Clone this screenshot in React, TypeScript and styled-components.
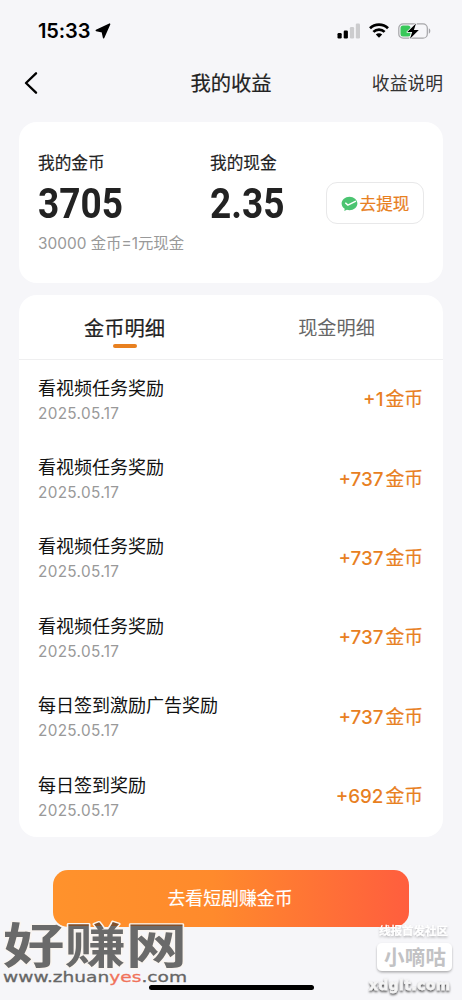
import React from 'react';
import styled, { createGlobalStyle } from 'styled-components';

const GlobalStyle = createGlobalStyle`
  * { box-sizing: border-box; }
  body {
    margin: 0;
    background: #f6f6f9;
    font-family: Inter, "Noto Sans CJK SC", sans-serif;
    color: #222;
  }
`;

const Screen = styled.main`
  position: relative;
  width: 462px;
  height: 1000px;
  overflow: hidden;
  display: flex;
  flex-direction: column;
  background: #f6f6f9;
  white-space: nowrap;
`;

const StatusBar = styled.div`
  height: 60px;
  padding: 1px 31px 0 38px;
  display: flex;
  align-items: center;
  justify-content: space-between;
  color: #000;
`;

const Clock = styled.div`
  display: flex;
  align-items: center;
  gap: 5px;
  font-size: 20px;
  font-weight: 600;
  letter-spacing: -0.1px;
  line-height: 24px;
`;

const StatusIcons = styled.div`
  display: flex;
  align-items: center;
  gap: 9px;
`;

const NavBar = styled.header`
  height: 46px;
  padding: 0 19px 0 24px;
  display: grid;
  grid-template-columns: 1fr auto 1fr;
  align-items: center;
`;

const PageTitle = styled.h1`
  margin: 2px 5px 0 0;
  font-size: 20.3px;
  line-height: 28px;
  font-weight: 400;
  -webkit-text-stroke: 0.2px currentColor;
`;

const NavLink = styled.span`
  justify-self: end;
  margin-top: 2px;
  font-size: 17.8px;
  line-height: 26px;
  color: #333;
`;

const Card = styled.section`
  margin: 0 19px;
  border-radius: 18px;
  background: #fff;
`;

const BalanceCard = styled(Card)`
  height: 161px;
  margin-top: 16px;
  padding: 28px 19px 0;
  display: grid;
  grid-template-columns: 172px 1fr auto;
`;

const BalanceLabel = styled.div`
  font-size: 16.7px;
  line-height: 26px;
  -webkit-text-stroke: 0.15px currentColor;
`;

const BalanceValue = styled.div`
  margin-top: 7px;
  height: 40px;
  font-family: Roboto, sans-serif;
  font-size: 43px;
  line-height: 40px;
  font-weight: 700;
  transform: scaleX(0.86);
  transform-origin: left center;
`;

const BalanceHint = styled.div`
  margin-top: 10px;
  font-size: 15.4px;
  line-height: 22px;
  color: #999;
`;

const WithdrawButton = styled.button`
  width: 98px;
  height: 42px;
  margin-top: 32px;
  padding: 1px 0 0;
  display: flex;
  align-items: center;
  justify-content: center;
  gap: 2px;
  border: 1.5px solid #e8e8e9;
  border-radius: 11px;
  background: #fff;
  color: #e8801f;
  font: 400 16.6px/24px Inter, "Noto Sans CJK SC", sans-serif;
  -webkit-text-stroke: 0.2px currentColor;
`;

const DetailCard = styled(Card)`
  height: 542px;
  margin-top: 12px;
`;

const Tabs = styled.div`
  height: 65px;
  display: grid;
  grid-template-columns: 1fr 1fr;
  border-bottom: 1px solid #efeff0;
`;

const Tab = styled.div<{ $active?: boolean }>`
  padding: 19px 1px 0 0;
  display: flex;
  flex-direction: column;
  align-items: center;
  font-size: ${p => (p.$active ? '20.3px' : '19.2px')};
  line-height: 29px;
  -webkit-text-stroke: ${p => (p.$active ? '0.2px' : '0')} currentColor;
  color: ${p => (p.$active ? '#222' : '#666')};

  &::after {
    content: '';
    width: 24px;
    height: 4px;
    margin-top: 0.5px;
    border-radius: 2px;
    background: ${p => (p.$active ? '#e8801f' : 'transparent')};
  }
`;

const Row = styled.div`
  height: 79.4px;
  padding: 1px 20px 0 19px;
  display: flex;
  align-items: center;
  justify-content: space-between;
`;

const RowTitle = styled.div`
  font-size: 18px;
  line-height: 26px;
  color: #111;
`;

const RowDate = styled.div`
  font-size: 15.3px;
  line-height: 23px;
  letter-spacing: 0.35px;
  color: #999;
`;

const Amount = styled.div`
  display: flex;
  gap: 2px;
  font-size: 18.8px;
  line-height: 28px;
  color: #e8801f;
`;

const AmountNumber = styled.span`
  font-weight: 500;
`;

const AmountUnit = styled.span`
  -webkit-text-stroke: 0.2px currentColor;
`;

const WatchButton = styled.button`
  flex: none;
  width: 356px;
  height: 57px;
  margin: 33px 0 0 53px;
  padding: 1px 2px 0 0;
  border: 0;
  border-radius: 15px;
  background: linear-gradient(90deg, #ff922c 0%, #ff8a2c 45%, #ff5e3e 100%);
  color: #fff;
  font: 400 17.9px/26px Inter, "Noto Sans CJK SC", sans-serif;
  -webkit-text-stroke: 0.15px currentColor;
`;

const HomeIndicator = styled.div`
  position: absolute;
  left: 149px;
  bottom: 10px;
  width: 165px;
  height: 5px;
  border-radius: 3px;
  background: #000;
`;

const SiteMark = styled.svg`
  position: absolute;
  left: 0;
  bottom: 8px;
  overflow: visible;
`;

const CommunityMark = styled.svg`
  position: absolute;
  right: 0;
  bottom: 0;
`;

const LocationIcon = () => (
  <svg width="16" height="16" viewBox="0 0 16 16">
    <path d="M14.600 1.100 1.300 7.400 7.300 8.700 8.600 14.700Z" fill="#000" stroke="#000" strokeWidth="1.500" strokeLinejoin="round" />
  </svg>
);

const SignalIcon = () => (
  <svg width="24" height="16" viewBox="0 0 24 16">
    <rect x="1.500" y="10" width="4.200" height="5.500" rx="1.200" />
    <rect x="7.700" y="7.500" width="4.200" height="8" rx="1.200" />
    <rect x="13.900" y="4" width="4.200" height="11.500" rx="1.200" fill="#ccccce" />
    <rect x="19.800" y=".5" width="4.200" height="15" rx="1.200" fill="#ccccce" />
  </svg>
);

const WifiIcon = () => (
  <svg width="20" height="15" viewBox="0 0 20 15" fill="none" stroke="#000" strokeWidth="2.700">
    <path d="M1 5.300a12.800 12.800 0 0 1 18 0" />
    <path d="M4.400 8.900a8 8 0 0 1 11.200 0" />
    <path d="M10 14.800 6.800 11.600a4.500 4.500 0 0 1 6.400 0Z" fill="#000" stroke="none" />
  </svg>
);

const BatteryIcon = () => (
  <svg width="33" height="16" viewBox="0 0 33 16">
    <rect x=".8" y=".8" width="28.500" height="14.400" rx="4.300" fill="none" stroke="#a5a5a8" strokeWidth="1.200" />
    <rect x="2.500" y="2.500" width="10" height="11" rx="2.500" fill="#38c759" />
    <path d="M30.800 5.300c2 .7 2 4.700 0 5.400Z" fill="#a5a5a8" />
    <path d="M18 .5 9.300 9h4.900l-2.200 6.700 8.800-8.700h-4.900Z" fill="#000" stroke="#f6f6f9" strokeWidth="1.600" paintOrder="stroke" strokeLinejoin="round" />
  </svg>
);

const BackIcon = () => (
  <svg width="14" height="22" viewBox="0 0 14 22" fill="none" stroke="#000" strokeWidth="2.300" strokeLinecap="round" strokeLinejoin="round">
    <path d="M12 1.300 2 11l10 9.700" />
  </svg>
);

const WechatPayIcon = () => (
  <svg width="17" height="16" viewBox="0 0 17 16">
    <path d="M8.500 .7C4.200 .7 .6 3.700.6 7.500c0 2.200 1.200 4 3.100 5.200l-.4 2.300 2.600-1.200c.8.200 1.700.4 2.600.4 4.300 0 7.900-3 7.900-6.700S12.800 .7 8.500 .7Z" fill="#4bc471" />
    <path d="m4.300 6.800 2.600 2.300 8-4" fill="none" stroke="#fff" strokeWidth="1.500" strokeLinejoin="round" />
  </svg>
);

const records = [
  { title: '看视频任务奖励', amount: '+1' },
  { title: '看视频任务奖励', amount: '+737' },
  { title: '看视频任务奖励', amount: '+737' },
  { title: '看视频任务奖励', amount: '+737' },
  { title: '每日签到激励广告奖励', amount: '+737' },
  { title: '每日签到奖励', amount: '+692' },
];

export default function App() {
  return (
    <>
      <GlobalStyle />
      <Screen>
        <StatusBar>
          <Clock>15:33<LocationIcon /></Clock>
          <StatusIcons><SignalIcon /><WifiIcon /><BatteryIcon /></StatusIcons>
        </StatusBar>
        <NavBar>
          <BackIcon />
          <PageTitle>我的收益</PageTitle>
          <NavLink>收益说明</NavLink>
        </NavBar>
        <BalanceCard>
          <div>
            <BalanceLabel>我的金币</BalanceLabel>
            <BalanceValue>3705</BalanceValue>
            <BalanceHint>30000 金币=1元现金</BalanceHint>
          </div>
          <div>
            <BalanceLabel>我的现金</BalanceLabel>
            <BalanceValue>2.35</BalanceValue>
          </div>
          <WithdrawButton><WechatPayIcon />去提现</WithdrawButton>
        </BalanceCard>
        <DetailCard>
          <Tabs>
            <Tab $active>金币明细</Tab>
            <Tab>现金明细</Tab>
          </Tabs>
          {records.map((r, i) => (
            <Row key={i}>
              <div>
                <RowTitle>{r.title}</RowTitle>
                <RowDate>2025.05.17</RowDate>
              </div>
              <Amount><AmountNumber>{r.amount}</AmountNumber><AmountUnit>金币</AmountUnit></Amount>
            </Row>
          ))}
        </DetailCard>
        <WatchButton>去看短剧赚金币</WatchButton>
        <HomeIndicator />
        <SiteMark width="200" height="76" viewBox="0 0 200 76">
          <defs>
            <pattern id="siteFill" patternUnits="userSpaceOnUse" x="-10" y="-10" width="220" height="100">
              <rect width="220" height="100" fill="#6a6a6a" />
              <rect x="58" width="162" height="20" fill="#80502c" />
            </pattern>
          </defs>
          <g fontFamily='"Noto Sans CJK SC", sans-serif' fontWeight="700" fontSize="48" transform="translate(3 0) scale(1.280 1)" strokeLinejoin="round">
            <text x="0" y="46.500" fill="url(#siteFill)" stroke="#faf5f0" strokeWidth="2.500" paintOrder="stroke">好赚网</text>
          </g>
          <g fontFamily='"DejaVu Sans", sans-serif' fontSize="14.500" fill="#666" stroke="#666" strokeWidth="0.300">
            <text x="3" y="65.500" textLength="184" lengthAdjust="spacingAndGlyphs">www.zhuan<tspan fill="#f0725a" stroke="#f0725a">yes</tspan>.com</text>
          </g>
        </SiteMark>
        <CommunityMark width="100" height="80" viewBox="0 0 100 80">
          <defs>
            <filter id="softShadow" x="-20%" y="-30%" width="140%" height="180%">
              <feDropShadow dx="0" dy="1.500" stdDeviation="1" floodColor="#000" floodOpacity="0.3" />
            </filter>
            <filter id="textShadow" x="-20%" y="-30%" width="140%" height="180%">
              <feDropShadow dx="0" dy="1.500" stdDeviation="0.800" floodColor="#000" floodOpacity="0.8" />
            </filter>
          </defs>
          <g fontFamily='"Noto Sans CJK SC", sans-serif' fontWeight="700">
            <text x="17" y="15" fontSize="11.500" fill="#fff" filter="url(#softShadow)" textLength="69">线报首发社区</text>
            <rect x="15" y="23" width="75" height="28" rx="5" fill="#fff" filter="url(#softShadow)" />
            <text x="22" y="44.500" fontSize="20.500" fill="#c2c2c4" fontWeight="700" textLength="62">小嘀咕</text>
          </g>
          <text x="7" y="69.500" fontFamily='"DejaVu Sans", sans-serif' fontWeight="700" fontSize="13.500" fill="#f4f4f4" stroke="#f4f4f4" strokeWidth="0.400" filter="url(#textShadow)" textLength="81">xdglt.com</text>
        </CommunityMark>
      </Screen>
    </>
  );
}
